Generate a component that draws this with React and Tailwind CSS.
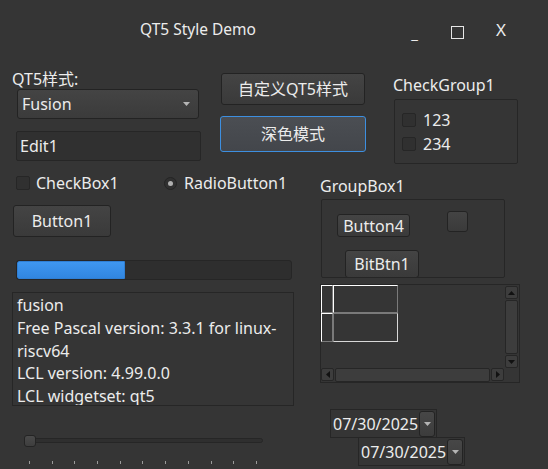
import React from 'react'

const font = { fontFamily: '"Noto Sans", "Noto Sans CJK SC", sans-serif' }

function Arrow({ className = '' }) {
  return (
    <svg width="7" height="4" viewBox="0 0 7 4" className={className}>
      <path d="M0 0 L7 0 L3.5 4 Z" fill="#b5b5b5" />
    </svg>
  )
}

function CheckBox() {
  return <div className="h-[14px] w-[14px] shrink-0 rounded-[2px] border border-[#262626] bg-[#303030]" />
}

function Button({ children, className = '' }) {
  return (
    <div
      className={[
        'flex items-center justify-center rounded-[3px] border border-[#232323] bg-gradient-to-b from-[#444444] to-[#3a3a3a] text-[#ececec]',
        className,
      ].join(' ')}
    >
      {children}
    </div>
  )
}

function DatePicker({ className = '' }) {
  return (
    <div className={['flex h-[29px] w-[107px] items-center border border-[#262626] pl-[2px] pr-[1px]', className].join(' ')}>
      <span className="flex-1 text-[16px] leading-none text-[#ececec]">07/30/2025</span>
      <div className="flex h-[26px] w-[16px] items-center justify-center rounded-[3px] border border-[#232323] bg-gradient-to-b from-[#474747] to-[#3c3c3c]">
        <Arrow />
      </div>
    </div>
  )
}

function ScrollBtn({ dir }) {
  const paths = {
    up: 'M0 4 L7 4 L3.5 0 Z',
    down: 'M0 0 L7 0 L3.5 4 Z',
    left: 'M4 0 L4 7 L0 3.5 Z',
    right: 'M0 0 L0 7 L4 3.5 Z',
  }
  const vertical = dir === 'up' || dir === 'down'
  return (
    <div className="flex h-[13px] w-[13px] items-center justify-center rounded-[2px] border border-[#262626] bg-[#3d3d3d]">
      <svg width={vertical ? 7 : 4} height={vertical ? 4 : 7} viewBox={vertical ? '0 0 7 4' : '0 0 4 7'}>
        <path d={paths[dir]} fill="#111" />
      </svg>
    </div>
  )
}

export default function App() {
  const ticks = Array.from({ length: 11 })

  return (
    <div className="h-[469px] w-[548px] overflow-hidden bg-[#353535] text-[#ececec]" style={font}>
      {/* title bar */}
      <div className="flex h-[60px] items-center">
        <div className="ml-[140px] text-[15.5px] leading-none">QT5 Style Demo</div>
        <div className="ml-auto mr-[42px] flex items-center">
          <span className="mt-[6px] text-[15px] leading-none">_</span>
          <div className="ml-[33px] mt-[4px] h-[13px] w-[13px] border border-[#e6e6e6]" />
          <span className="ml-[32px] -mt-[1px] text-[17px] leading-none">X</span>
        </div>
      </div>

      {/* top section */}
      <div className="flex items-start">
        <div className="w-[201px]">
          <div className="ml-[12px] mt-[9px] text-[16px] leading-[20px]">QT5样式:</div>
          <div className="ml-[17px] flex h-[30px] w-[182px] items-center rounded-[3px] border border-[#232323] bg-gradient-to-b from-[#444444] to-[#3b3b3b] pl-[4px] pr-[8px]">
            <span className="flex-1 text-[16px] leading-none">Fusion</span>
            <Arrow />
          </div>
          <div className="ml-[16px] mt-[12px] flex h-[30px] w-[185px] items-center rounded-[2px] border border-[#262626] bg-[#303030] pl-[3px]">
            <span className="text-[16px] leading-none">Edit1</span>
          </div>
        </div>

        <div className="ml-[20px] mt-[13px]">
          <Button className="h-[32px] w-[144px] text-[16px]">自定义QT5样式</Button>
          <div className="-ml-px mt-[11px] flex h-[36px] w-[146px] items-center justify-center rounded-[3px] border border-[#3d8fe0] bg-gradient-to-b from-[#4b4e53] to-[#43464b] text-[16px]">
            深色模式
          </div>
        </div>

        <div className="ml-[27px] mt-[15px]">
          <div className="text-[16px] leading-[20px]">CheckGroup1</div>
          <div className="ml-px mt-[4px] h-[65px] w-[124px] rounded-[2px] border border-[#262626] pl-[7px] pt-[13px]">
            <div className="flex h-[14px] items-center gap-[7px]">
              <CheckBox />
              <span className="text-[16px] leading-none">123</span>
            </div>
            <div className="mt-[10px] flex h-[14px] items-center gap-[7px]">
              <CheckBox />
              <span className="text-[16px] leading-none">234</span>
            </div>
          </div>
        </div>
      </div>

      {/* bottom section */}
      <div className="flex items-start">
        <div className="w-[300px]">
          <div className="ml-[16px] mt-[12px] flex h-[14px] items-center">
            <div className="flex w-[148px] items-center gap-[6px]">
              <CheckBox />
              <span className="text-[16px] leading-none">CheckBox1</span>
            </div>
            <div className="flex items-center gap-[7px]">
              <div className="flex h-[13px] w-[13px] items-center justify-center rounded-full border border-[#242424] bg-[#303030]">
                <div className="h-[5px] w-[5px] rounded-full bg-[#b0b0b0]" />
              </div>
              <span className="text-[16px] leading-none">RadioButton1</span>
            </div>
          </div>

          <Button className="ml-[13px] mt-[15px] h-[32px] w-[98px] text-[16px]">Button1</Button>

          <div className="ml-[16px] mt-[23px] h-[20px] w-[276px] overflow-hidden rounded-[3px] border border-[#262626] bg-[#2e2e2e]">
            <div className="h-full w-[108px] rounded-l-[2px] border border-[#2f7fd4] bg-gradient-to-b from-[#3f97f0] to-[#3186e0]" />
          </div>

          <div className="ml-[12px] mt-[12px] h-[114px] w-[282px] overflow-hidden border border-[#262626] pl-[4px] pt-[1px] text-[16px] leading-[22.75px]">
            <div>fusion</div>
            <div>Free Pascal version: 3.3.1 for linux-</div>
            <div>riscv64</div>
            <div>LCL version: 4.99.0.0</div>
            <div>LCL widgetset: qt5</div>
          </div>

          <div className="relative ml-[24px] mt-[29px] h-[12px] w-[239px]">
            <div className="absolute left-0 right-0 top-[3px] h-[5px] rounded-full border border-[#262626] bg-[#2f2f2f]" />
            <div className="absolute left-0 top-0 h-[12px] w-[12px] rounded-[3px] border border-[#242424] bg-gradient-to-b from-[#4a4a4a] to-[#3e3e3e]" />
          </div>
          <div className="ml-[29px] mt-[14px] flex w-[228px] justify-between">
            {ticks.map((_, i) => (
              <div key={i} className="h-[3px] w-px bg-[#9a9a9a]" />
            ))}
          </div>
        </div>

        <div className="ml-[20px]">
          <div className="mt-[12px] text-[16px] leading-[20px]">GroupBox1</div>
          <div className="ml-px mt-[3px] h-[79px] w-[184px] overflow-hidden rounded-[2px] border border-[#262626]">
            <div className="flex items-start">
              <Button className="ml-[15px] mt-[14px] h-[23px] w-[73px] text-[16px]">Button4</Button>
              <Button className="ml-[37px] mt-[11px] h-[21px] w-[21px]" />
            </div>
            <Button className="ml-[23px] mt-[13px] h-[28px] w-[74px] text-[16px]">BitBtn1</Button>
          </div>

          <div className="mt-[6px] flex h-[99px] w-[200px] flex-col border border-[#262626]">
            <div className="flex flex-1">
              <div className="flex-1">
                <div className="flex">
                  <div className="h-[28px] w-[12px] border-l border-t border-b border-r border-b-[#7a7a7a] border-l-white border-r-[#7a7a7a] border-t-white" />
                  <div className="h-[28px] w-[65px] border-l border-t border-b border-r border-b-[#7a7a7a] border-l-white border-r-[#7a7a7a] border-t-white" />
                </div>
                <div className="flex">
                  <div className="h-[29px] w-[12px] border-l border-t border-b border-r border-b-[#7a7a7a] border-l-white border-r-[#7a7a7a] border-t-white" />
                  <div className="h-[29px] w-[65px] border-l border-t border-b border-r border-b-[#d8d8d8] border-l-[#7a7a7a] border-r-[#d8d8d8] border-t-[#7a7a7a]" />
                </div>
              </div>
              <div className="flex w-[14px] flex-col gap-[1px] pt-px">
                <ScrollBtn dir="up" />
                <div className="mr-px flex-1 rounded-[2px] border border-[#262626] bg-[#3d3d3d]" />
                <ScrollBtn dir="down" />
              </div>
            </div>
            <div className="flex h-[14px]">
              <div className="flex flex-1 gap-[1px]">
                <ScrollBtn dir="left" />
                <div className="flex-1 rounded-[2px] border border-[#262626] bg-[#3d3d3d]" />
                <ScrollBtn dir="right" />
              </div>
              <div className="w-[15px]" />
            </div>
          </div>

          <DatePicker className="ml-[10px] mt-[26px]" />
          <DatePicker className="-mt-px ml-[38px]" />
        </div>
      </div>
    </div>
  )
}
